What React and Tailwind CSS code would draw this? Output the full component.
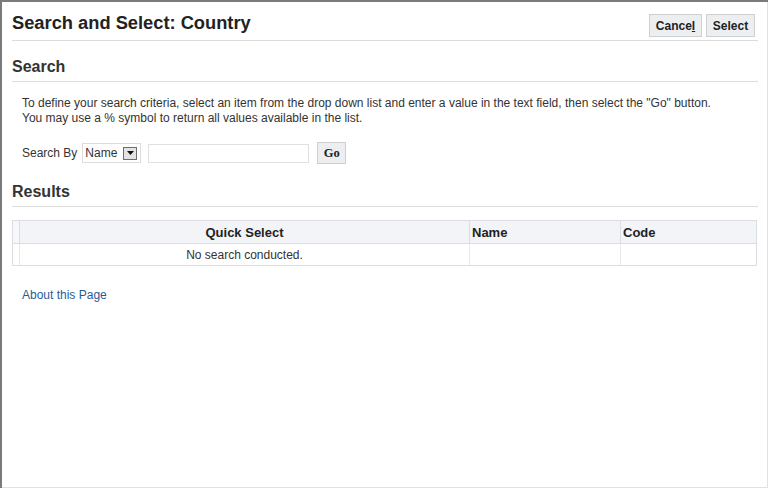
import React, { useState } from 'react';

const App = () => {
    const [searchBy, setSearchBy] = useState('Name');
    const [query, setQuery] = useState('');

    return (
        <div className="w-[770px] h-[489px] bg-white overflow-hidden font-['Liberation_Sans',Arial,sans-serif] text-[#333]">
            <div className="w-[768px] h-[488px] border-t-2 border-l-2 border-[#7b7b7b]">
                <div className="h-full border-r border-b border-[#e2e2e2] pl-[10px] pr-[9px]">
                    {/* title bar */}
                    <div className="h-[39px] flex justify-between items-start border-b border-[#dcdcdc]">
                        <h1 className="mt-[10px] text-[18.3px] leading-[22px] font-bold text-[#222]">Search and Select: Country</h1>
                        <div className="mt-[12px] mr-[3px] flex gap-[4px]">
                            <button className="h-[23px] w-[53px] bg-[#eceef0] border border-[#cdd0d3] text-[12px] font-bold text-[#222] leading-none">
                                Cance<span className="underline">l</span>
                            </button>
                            <button className="h-[23px] w-[49px] bg-[#eceef0] border border-[#cdd0d3] text-[12px] font-bold text-[#222] leading-none">
                                Select
                            </button>
                        </div>
                    </div>

                    {/* search */}
                    <h2 className="pt-[16px] pb-[4px] text-[16px] leading-[20px] font-bold border-b border-[#dcdcdc]">Search</h2>
                    <div className="pl-[10px]">
                        <p className="mt-[14px] text-[12px] leading-[15px]">
                            To define your search criteria, select an item from the drop down list and enter a value in the text field, then select the "Go" button.
                            <br />
                            You may use a % symbol to return all values available in the list.
                        </p>
                        <div className="mt-[16px] h-[22px] flex items-center text-[12px]">
                            <span className="mr-[5px]">Search By</span>
                            <div className="h-[20px] w-[59px] border border-[#dcdcdc] flex items-center justify-between pl-[2px] pr-[3px]">
                                <span>{searchBy}</span>
                                <span className="w-[14px] h-[13px] bg-[#e3e3e3] border border-[#6e6e6e] flex items-center justify-center" onClick={() => setSearchBy('Name')}>
                                    <svg width="7" height="4" viewBox="0 0 7 4"><path d="M0 0h7L3.5 4z" fill="#111" /></svg>
                                </span>
                            </div>
                            <input
                                value={query}
                                onChange={(e) => setQuery(e.target.value)}
                                className="ml-[7px] h-[19px] w-[161px] border border-[#e0e0e0] outline-none px-1"
                            />
                            <button className="ml-[8px] h-[22px] w-[29px] bg-[#eceef0] border border-[#cdd0d3] font-['Liberation_Serif',serif] font-bold text-[12.5px] text-[#222]">
                                Go
                            </button>
                        </div>
                    </div>

                    {/* results */}
                    <h2 className="mt-[18px] pb-[4px] text-[16px] leading-[20px] font-bold border-b border-[#dcdcdc]">Results</h2>
                    <div className="mt-[13px] w-[745px] border border-[#dadde2] text-[12px]">
                        <div className="grid grid-cols-[7px_450px_151px_1fr] h-[23px] bg-[#f2f4f7] border-b border-[#dadde2] text-[13px] font-bold text-[#222]">
                            <div className="border-r border-[#dadde2] bg-[#f6f7f9]"></div>
                            <div className="flex items-center justify-center pt-[2px] border-r border-[#dadde2]">Quick Select</div>
                            <div className="flex items-center pt-[2px] pl-[2px] border-r border-[#dadde2]">Name</div>
                            <div className="flex items-center pt-[2px] pl-[2px]">Code</div>
                        </div>
                        <div className="grid grid-cols-[7px_450px_151px_1fr] h-[21px]">
                            <div className="border-r border-[#e6e8eb]"></div>
                            <div className="flex items-center justify-center border-r border-[#e6e8eb]">No search conducted.</div>
                            <div className="border-r border-[#e6e8eb]"></div>
                            <div></div>
                        </div>
                    </div>

                    <div className="pl-[10px] mt-[16px]">
                        <a href="#" className="text-[12px] leading-[15px] text-[#1f5d99]">About this Page</a>
                    </div>
                </div>
            </div>
        </div>
    );
};

export default App;
